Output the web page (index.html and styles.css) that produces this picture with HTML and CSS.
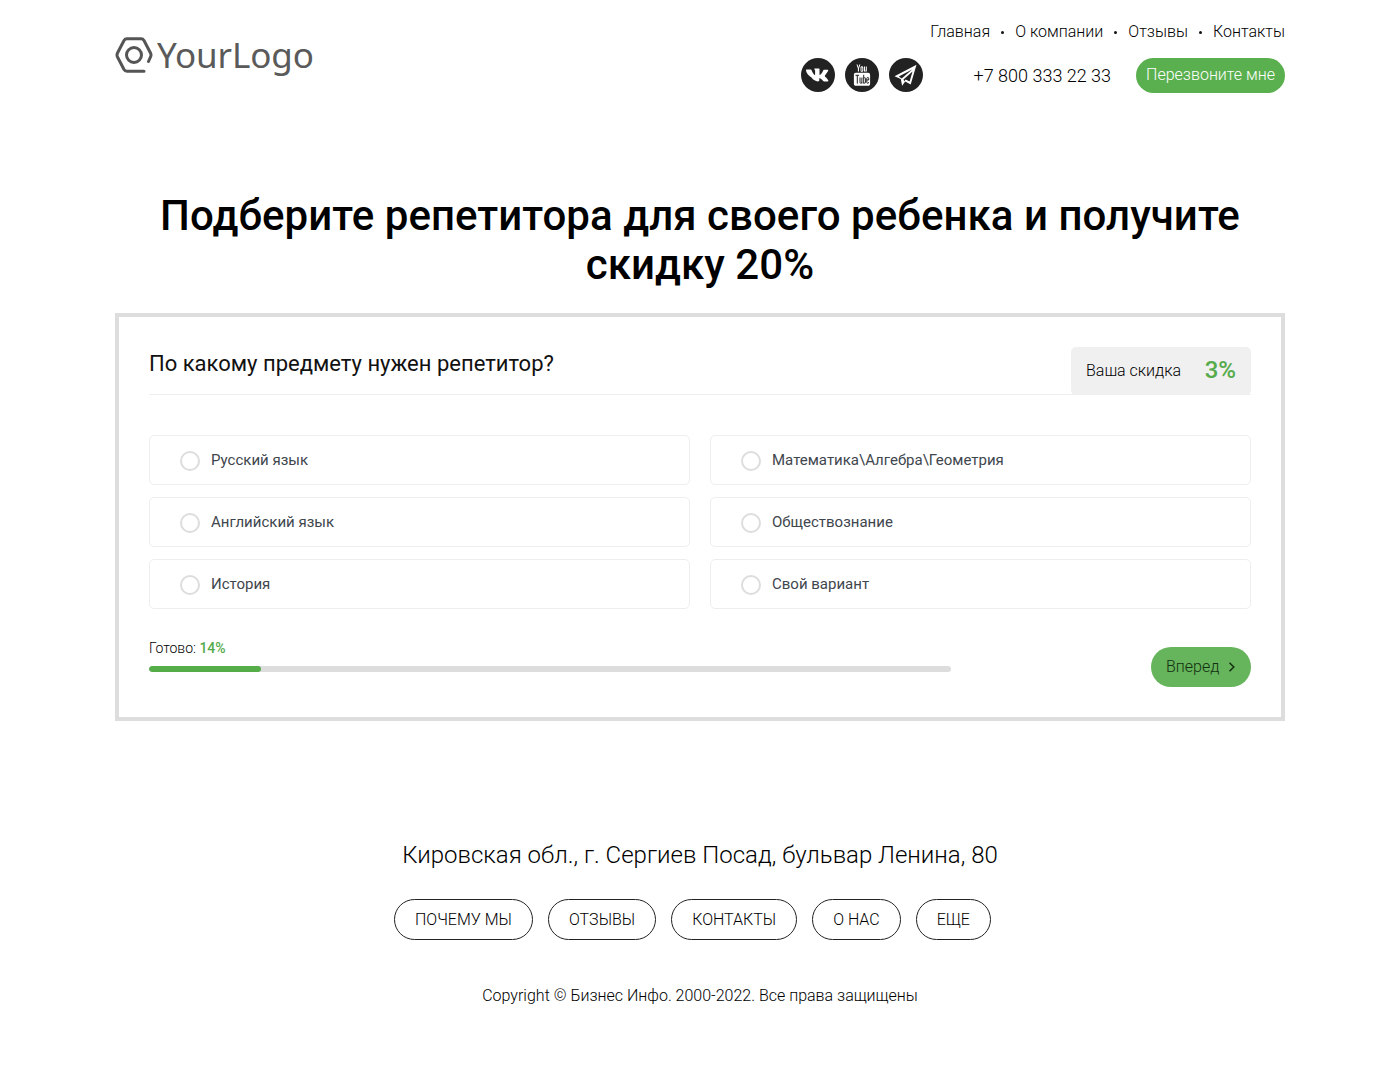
FILE: index.html
```html
<!DOCTYPE html>
<html lang="ru">
<head>
<meta charset="utf-8">
<title>Подбор репетитора</title>
<link rel="stylesheet" href="styles.css">
</head>
<body>
<div class="page">
  <header class="header">
    <a class="logo">
      <svg class="logo-icon" viewBox="0 0 38 36" width="38" height="36" fill="none" stroke="#555">
        <path d="M29 34.200H12Q10 34.200 9 32.500L2.500 20Q1.500 18 2.500 16L9 3.500Q10 1.800 12 1.800H26Q28 1.800 29 3.500L35.500 16Q36.500 18 35.500 20L33.500 24.500" stroke-width="3" stroke-linecap="round"/>
        <circle cx="19" cy="18" r="7.500" stroke-width="3"/>
      </svg>
      <span class="logo-text">YourLogo</span>
    </a>
    <div class="header-right">
      <nav class="topnav">
        <a>Главная</a><i class="dot"></i><a>О компании</a><i class="dot"></i><a>Отзывы</a><i class="dot"></i><a>Контакты</a>
      </nav>
      <div class="contacts">
        <div class="socials">
          <a class="social">
            <svg viewBox="0 0 34 34" width="34" height="34"><path fill="#fff" d="M5.500 11.500h4.200c.4 0 .6.200.8.600.6 1.700 2.300 4.800 3.200 4.800.3 0 .4-.2.4-1V12.800c-.1-1.300-.8-1.400-.8-1.900 0-.2.2-.4.500-.4h4.200c.4 0 .5.200.5.600v5.200c0 .4.200.6.300.6.300 0 .6-.2 1.200-.8 1.300-1.500 2.200-3.700 2.200-3.700.1-.3.400-.6.800-.6h3.600c.6 0 .7.300.6.700-.2.900-3.200 5-3.200 5-.2.400-.3.600 0 1 .2.300 1 1 1.500 1.500.9 1 1.600 1.900 1.800 2.500.2.600-.1.900-.7.900h-3.500c-.8 0-1-.6-2.300-1.900-1.200-1.100-1.700-1.300-2-1.300-.4 0-.5.100-.5.700v1.700c0 .5-.2.800-1.500.8-2.200 0-4.600-1.300-6.300-3.800C6.500 16.900 5 13.500 5 12.200c0-.4.100-.7.500-.7z"/></svg>
          </a>
          <a class="social">
            <svg viewBox="0 0 34 34" width="34" height="34"><path fill="#fff" d="M11.500 6.500h1.100l.9 2.900.8-2.900h1.100l-1.400 4.100v3h-1.100v-3zM16.900 8.300c.9 0 1.400.6 1.400 1.400v2.700c0 .8-.5 1.400-1.400 1.400s-1.400-.6-1.400-1.400V9.700c0-.8.500-1.400 1.400-1.400zm0 .9c-.2 0-.4.200-.4.500v2.700c0 .3.200.5.400.5s.4-.2.400-.5V9.700c0-.3-.2-.5-.4-.5zM19 8.400h1v4c0 .2.100.3.200.3s.4-.1.600-.4V8.400h1v5.200h-1V13c-.3.400-.8.700-1.100.7-.4 0-.7-.3-.7-.9zM10.800 14.800h12.400c1.100 0 1.900.8 1.900 1.900v9.200c0 1.100-.8 1.900-1.900 1.900H10.800c-1.100 0-1.900-.8-1.900-1.900v-9.200c0-1.100.8-1.900 1.900-1.900z"/><path fill="none" stroke="#222" stroke-width="1" d="M10.500 17.300h3.600M12.300 17.300v8.300M15 19.500v5c0 .8.900.9 1.900 0M16.900 19.500v6.100M18.700 16.800v8.800M18.700 20.300c1-1 1.900-.7 1.900.3v3.600c0 1-.9 1.300-1.900.3M21.800 22h1.900v-1.500c0-1.500-1.900-1.500-1.900 0v3.700c0 1.500 1.900 1.500 1.900 0"/></svg>
          </a>
          <a class="social">
            <svg viewBox="0 0 34 34" width="34" height="34"><path fill="#fff" d="M27.500 6.800 5.500 18.300l6.300 2.800 1.300 6.700 3.100-4.300 5.500 2.900zM9.800 18.400l13.300-7-10.400 9zM14.500 21.600l9-8.100-2.900 10.100-3.900-2.200-1.500 1.900z"/></svg>
          </a>
        </div>
        <span class="phone">+7 800 333 22 33</span>
        <a class="callback">Перезвоните мне</a>
      </div>
    </div>
  </header>

  <main>
    <h1 class="title">Подберите репетитора для своего ребенка и получите скидку 20%</h1>
    <section class="quiz">
      <div class="quiz-head">
        <h2 class="question">По какому предмету нужен репетитор?</h2>
        <div class="discount"><span>Ваша скидка</span><b>3%</b></div>
      </div>
      <div class="options">
        <label class="option"><i class="radio"></i>Русский язык</label>
        <label class="option"><i class="radio"></i>Математика\Алгебра\Геометрия</label>
        <label class="option"><i class="radio"></i>Английский язык</label>
        <label class="option"><i class="radio"></i>Обществознание</label>
        <label class="option"><i class="radio"></i>История</label>
        <label class="option"><i class="radio"></i>Свой вариант</label>
      </div>
      <div class="quiz-foot">
        <div class="progress">
          <div class="progress-label">Готово: <b>14%</b></div>
          <div class="bar"><div class="bar-fill"></div></div>
        </div>
        <a class="next"><span>Вперед</span>
          <svg viewBox="0 0 8 12" width="8" height="12" fill="none" stroke="#12300f" stroke-width="1.500"><path d="M1.500 1.800 5.800 6l-4.300 4.200"/></svg>
        </a>
      </div>
    </section>
  </main>

  <footer class="footer">
    <div class="address">Кировская обл., г. Сергиев Посад, бульвар Ленина, 80</div>
    <div class="footer-links">
      <a class="pill">ПОЧЕМУ МЫ</a><a class="pill">ОТЗЫВЫ</a><a class="pill">КОНТАКТЫ</a><a class="pill">О НАС</a><a class="pill">ЕЩЕ</a>
    </div>
    <div class="copyright">Copyright © Бизнес Инфо. 2000-2022. Все права защищены</div>
  </footer>
</div>
</body>
</html>
```
FILE: styles.css
```css
* { box-sizing: border-box; }
html, body { margin: 0; padding: 0; background: #fff; }
body { font-family: Roboto, "Liberation Sans", sans-serif; color: #000; }
.page { width: 1170px; margin: 0 auto; }

.header { display: flex; justify-content: space-between; align-items: flex-start; padding-top: 22px; height: 180px; }
.logo { display: flex; align-items: center; gap: 4px; margin-top: 11px; }
.logo-icon { display: block; }
.logo-text { font-family: "Noto Sans", sans-serif; font-weight: 400; font-size: 35px; line-height: 44px; color: #5a5a5a; letter-spacing: -.1px; }
.header-right { display: flex; flex-direction: column; align-items: flex-end; }
.topnav { display: flex; align-items: center; font-size: 16px; font-weight: 300; line-height: 20px; letter-spacing: .01px; }
.dot { width: 3px; height: 3px; border-radius: 50%; background: #111; margin: 0 11px; }
.contacts { display: flex; align-items: center; margin-top: 16px; }
.socials { display: flex; gap: 10px; margin-right: 51px; margin-bottom: 1px; }
.social { display: block; width: 34px; height: 34px; border-radius: 50%; background: #222; }
.social svg { display: block; }
.phone { font-size: 18px; font-weight: 300; margin-right: 25px; }
.callback { display: block; height: 35px; line-height: 33px; padding: 0 10px; border-radius: 18px; background: #5ab04e; color: #fff; font-size: 16px; font-weight: 300; }

.title { margin: 0 0 24px; text-align: center; font-size: 42px; line-height: 49px; font-weight: 500; color: #000; padding-top: 11px; letter-spacing: .05px; }

.quiz { border: 4px solid #ddd; padding: 30px; height: 408px; }
.quiz-head { display: flex; justify-content: space-between; height: 48px; border-bottom: 1px solid #eee; }
.question { margin: 0; font-size: 22px; font-weight: 400; line-height: 33px; color: #111; }
.discount { display: flex; align-items: center; justify-content: space-between; width: 180px; height: 48px; padding: 0 15px 2px; background: #f0f0f0; border-radius: 5px; font-size: 16px; font-weight: 300; }
.discount b { font-size: 24px; font-weight: 500; color: #55ab4b; }

.options { display: grid; grid-template-columns: 1fr 1fr; gap: 12px 20px; margin-top: 40px; }
.option { display: flex; align-items: center; height: 50px; padding-left: 30px; border: 1px solid #eee; border-radius: 5px; font-size: 15px; color: #40464d; }
.radio { width: 20px; height: 20px; margin-right: 11px; margin-top: 2px; border: 2px solid #ddd; border-radius: 50%; flex: none; }

.quiz-foot { display: flex; justify-content: space-between; align-items: flex-start; margin-top: 29px; }
.progress { width: 802px; }
.progress-label { font-size: 14px; font-weight: 300; line-height: 20px; }
.progress-label b { font-weight: 500; color: #55ab4b; }
.bar { height: 6px; margin-top: 8px; border-radius: 3px; background: #ddd; overflow: hidden; }
.bar-fill { width: 112px; height: 6px; border-radius: 3px; background: #55ad4a; }
.next { display: flex; align-items: center; gap: 9px; width: 100px; height: 40px; padding-left: 15px; margin-top: 9px; border-radius: 20px; background: #66b45c; color: #12300f; font-size: 16px; font-weight: 300; }
.next span { margin-top: -2px; }

.footer { margin-top: 118px; text-align: center; font-weight: 300; }
.address { font-size: 24px; line-height: 32px; }
.footer-links { display: flex; justify-content: center; gap: 15px; margin-top: 28px; padding-right: 15px; }
.pill { display: block; height: 41px; line-height: 39px; padding: 0 20px; border: 1px solid #222; border-radius: 21px; font-size: 16px; }
.copyright { margin-top: 46px; font-size: 16px; line-height: 20px; }
```
